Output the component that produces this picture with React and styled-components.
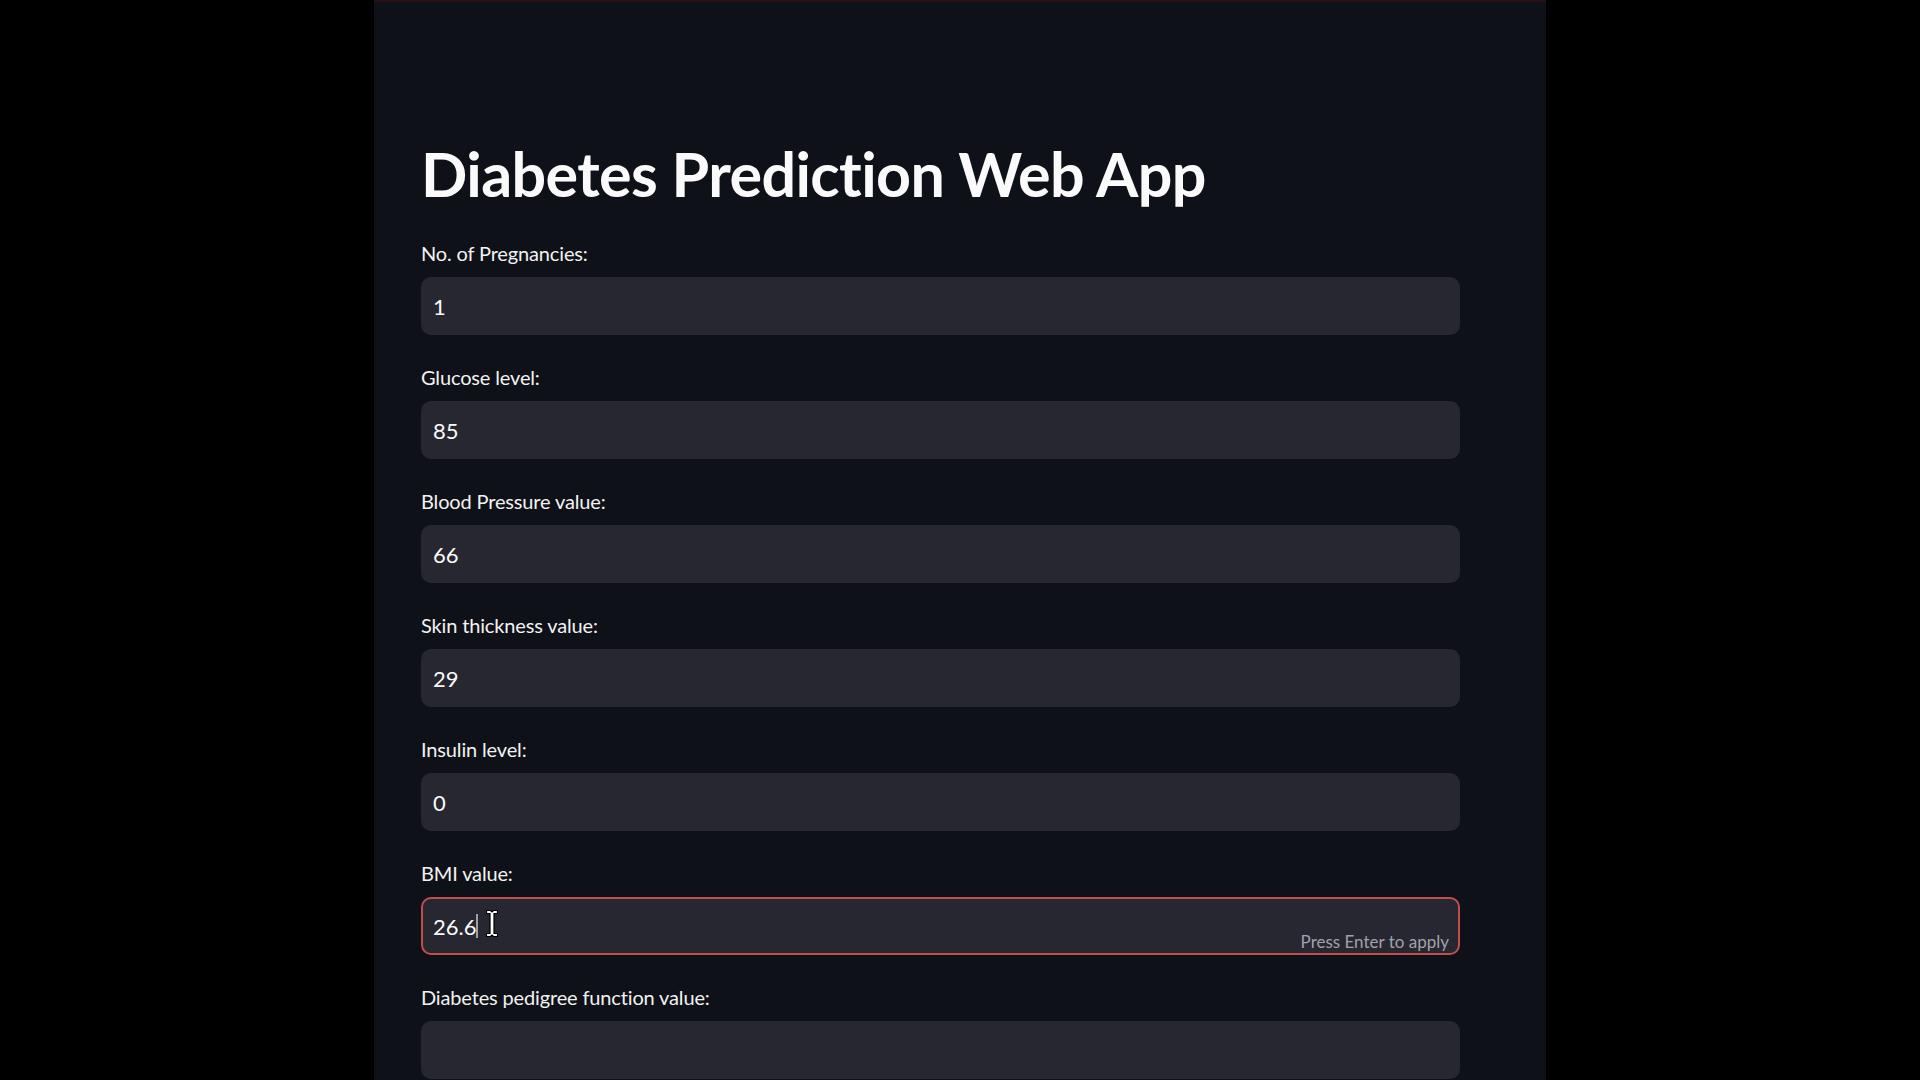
import React from "react";
import styled, { createGlobalStyle } from "styled-components";

const Global = createGlobalStyle`
  html, body {
    margin: 0;
    padding: 0;
    background: #000000;
    height: 100%;
    overflow: hidden;
  }
  * { box-sizing: border-box; }
`;

const Stage = styled.div`
  display: flex;
  justify-content: center;
  width: 100%;
  height: 1080px;
  background: #000000;
`;

const Panel = styled.main`
  width: 1172px;
  height: 1080px;
  background: #0e1117;
  border-top: 2px solid #2a1012;
  padding: 135px 86px 0 47px;
  font-family: Lato, "Open Sans", sans-serif;
  color: #fafafa;
`;

const Title = styled.h1`
  margin: 0 0 31px 0;
  font-size: 61px;
  line-height: 1.2;
  font-weight: 700;
  letter-spacing: -0.6px;
  color: #fafafa;
`;

const Form = styled.div`
  display: flex;
  flex-direction: column;
  gap: 30px;
`;

const Field = styled.div`
  display: flex;
  flex-direction: column;
  gap: 12px;
`;

const Label = styled.label`
  font-size: 20px;
  line-height: 24px;
  letter-spacing: -0.15px;
  color: #f2f2f2;
`;

const InputBox = styled.div`
  position: relative;
  height: 58px;
  border-radius: 10px;
  background: #262730;
  border: 2px solid ${(p) => (p.$focused ? "#c24d4d" : "#262730")};
  display: flex;
  align-items: center;
  padding-left: 10px;
  font-size: 22px;
  color: #fafafa;
`;

const Caret = styled.span`
  display: inline-block;
  width: 2px;
  height: 24px;
  margin-left: 0;
  background: #9ea0a8;
`;

const Hint = styled.span`
  position: absolute;
  right: 9px;
  bottom: 1px;
  font-size: 17px;
  color: #a0a2aa;
`;

const Pointer = styled.svg`
  position: absolute;
  left: 62px;
  top: 10px;
`;

const fields = [
  ["No. of Pregnancies:", "1"],
  ["Glucose level:", "85"],
  ["Blood Pressure value:", "66"],
  ["Skin thickness value:", "29"],
  ["Insulin level:", "0"],
  ["BMI value:", "26.6", true],
  ["Diabetes pedigree function value:", ""],
];

export default function App() {
  return (
    <>
      <Global />
      <Stage>
        <Panel>
          <Title>Diabetes Prediction Web App</Title>
          <Form>
            {fields.map(([label, value, focused]) => (
              <Field key={label}>
                <Label>{label}</Label>
                <InputBox $focused={focused}>
                  {value}
                  {focused && (
                    <>
                      <Caret />
                      <Pointer width="14" height="30" viewBox="0 0 14 30">
                        <path
                          d="M1.5 1.5 h4 l1.5 1.5 l1.5 -1.5 h4 v3 h-3.5 v20 h3.5 v3 h-4 l-1.5 -1.5 l-1.5 1.5 h-4 v-3 h3.5 v-20 h-3.5 z"
                          fill="#ffffff"
                          stroke="#000000"
                          strokeWidth="1.2"
                        />
                      </Pointer>
                      <Hint>Press Enter to apply</Hint>
                    </>
                  )}
                </InputBox>
              </Field>
            ))}
          </Form>
        </Panel>
      </Stage>
    </>
  );
}
